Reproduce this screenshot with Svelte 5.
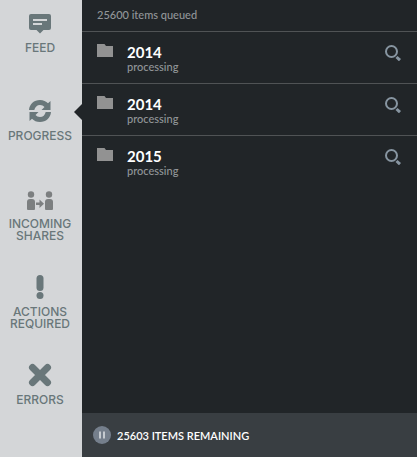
<script>
  let active = $state('progress');
  let paused = $state(false);

  const tabs = [
    { id: 'feed', label: 'Feed' },
    { id: 'progress', label: 'Progress' },
    { id: 'shares', label: 'Incoming Shares' },
    { id: 'actions', label: 'Actions Required' },
    { id: 'errors', label: 'Errors' }
  ];

  const items = [
    { name: '2014', status: 'processing' },
    { name: '2014', status: 'processing' },
    { name: '2015', status: 'processing' }
  ];
</script>

<div class="app">
  <nav class="sidebar">
    {#each tabs as tab}
      <button class="tab" class:active={active === tab.id} onclick={() => (active = tab.id)}>
        <svg class="tab-icon" viewBox="0 0 28 24" aria-hidden="true">
          {#if tab.id === 'feed'}
            <path d="M5 3h18q2 0 2 2v12q0 2-2 2h-5.500l-3.500 3.500-3.500-3.500H5q-2 0-2-2V5q0-2 2-2z" />
            <path class="cut" d="M7 8h14v2H7zM7 12h9v2H7z" />
          {:else if tab.id === 'progress'}
            <path d="M3 11C3.500 5 8 1 14 1c3.500 0 6 1.300 8 3.300L24.500 2v9H15.500l3-3C17.300 6.700 16 6 14 6c-3 0-5 2-5.700 5z" />
            <path d="M25 13c-.5 6-5 10-11 10-3.500 0-6-1.300-8-3.300L3.500 22v-9h9l-3 3c1.200 1.300 2.500 2 4.500 2 3 0 5-2 5.700-5z" />
          {:else if tab.id === 'shares'}
            <g class="people">
              <circle cx="5" cy="7.500" r="3.200" />
              <path d="M1 22v-7q0-3 3-3h2q3 0 3 3v7q0 1-1 1H2q-1 0-1-1z" />
              <circle cx="23" cy="7.500" r="3.200" />
              <path d="M19 22v-7q0-3 3-3h2q3 0 3 3v7q0 1-1 1h-6q-1 0-1-1z" />
              <path d="M10 15.500h3.500V12.500l4.500 4.200-4.500 4.200v-3H10z" />
            </g>
          {:else if tab.id === 'actions'}
            <rect x="10.500" y="0" width="7" height="16" rx="3.500" />
            <circle cx="14" cy="20.500" r="3.500" />
          {:else}
            <path class="cross" d="M6.500 4.500l15 15M21.500 4.500l-15 15" />
          {/if}
        </svg>
        <span class="tab-label">{tab.label}</span>
      </button>
    {/each}
  </nav>

  <main class="panel">
    <p class="queued">25600 items queued</p>

    <ul class="items">
      {#each items as item}
        <li class="item">
          <svg class="folder" viewBox="0 0 16 13" aria-hidden="true">
            <path d="M0 0h7.500L9 2h7v11H0z" />
          </svg>
          <div class="info">
            <span class="name">{item.name}</span>
            <span class="status">{item.status}</span>
          </div>
          <button class="search" aria-label="Find {item.name}">
            <svg viewBox="0 0 16 16" aria-hidden="true">
              <circle cx="6.500" cy="6.500" r="5.500" />
              <path class="handle" d="M11.500 12l3.500 3.200" />
            </svg>
          </button>
        </li>
      {/each}
    </ul>

    <footer class="footer">
      <button class="pause" aria-label={paused ? 'Resume' : 'Pause'} onclick={() => (paused = !paused)}>
        <svg viewBox="0 0 18 18" aria-hidden="true">
          <circle cx="9" cy="9" r="9" />
          {#if paused}
            <path d="M7 5l6 4-6 4z" />
          {:else}
            <path d="M6 5.500h2v7H6zM10 5.500h2v7h-2z" />
          {/if}
        </svg>
      </button>
      <span>25603 ITEMS REMAINING</span>
    </footer>
  </main>
</div>

<style>
  :global(body) {
    margin: 0;
    background: #212528;
  }

  .app {
    display: flex;
    min-height: 100vh;
    font-family: Lato, sans-serif;
    color: #fff;
  }

  button {
    padding: 0;
    border: 0;
    background: none;
    font: inherit;
    color: inherit;
    cursor: pointer;
  }

  .sidebar {
    display: flex;
    flex-direction: column;
    flex: none;
    width: 82px;
    background: #d4d6d8;
  }

  .tab {
    position: relative;
    display: flex;
    flex-direction: column;
    align-items: center;
    gap: 7px;
    min-height: 88px;
    padding: 11px 5px 0 3px;
    color: #69777a;
  }

  .tab.active::after {
    content: '';
    position: absolute;
    top: 16px;
    right: 0;
    border: 8px solid transparent;
    border-left-width: 0;
    border-right-color: #212528;
  }

  .tab-icon {
    width: 28px;
    height: 24px;
    fill: currentColor;
  }

  .cut {
    fill: #d4d6d8;
  }

  .people {
    fill: #7c7f80;
  }

  .cross {
    fill: none;
    stroke: currentColor;
    stroke-width: 7;
    stroke-linecap: round;
  }

  .tab-label {
    font-family: Inter, sans-serif;
    font-size: 12px;
    font-weight: 500;
    line-height: 12px;
    text-transform: uppercase;
  }

  .panel {
    display: flex;
    flex-direction: column;
    flex: 1;
    min-width: 0;
    background: #212528;
  }

  .queued {
    margin: 0;
    padding: 7px 15px 8px;
    font-size: 11px;
    font-weight: 500;
    line-height: 16px;
    color: #929699;
  }

  .items {
    flex: 1;
    margin: 0;
    padding: 0;
    list-style: none;
  }

  .item {
    display: flex;
    align-items: flex-start;
    padding: 12px 16px 9px 15px;
    border-top: 1px solid #505355;
  }

  .folder {
    width: 16px;
    height: 13px;
    margin-right: 14px;
    fill: #929292;
  }

  .info {
    display: flex;
    flex-direction: column;
    flex: 1;
  }

  .name {
    font-size: 15px;
    font-weight: 700;
    line-height: 16px;
  }

  .status {
    font-size: 11px;
    font-weight: 500;
    line-height: 14px;
    color: #929699;
  }

  .search {
    display: flex;
    margin-top: 1px;
  }

  .search svg {
    width: 16px;
    height: 16px;
    fill: none;
    stroke: #8795a1;
    stroke-width: 2;
  }

  .search .handle {
    stroke-width: 3;
  }

  .footer {
    display: flex;
    align-items: center;
    gap: 6px;
    min-height: 44px;
    padding: 0 11px;
    background: #393e42;
    font-size: 11px;
    font-weight: 600;
  }

  .pause {
    display: flex;
  }

  .pause svg {
    width: 18px;
    height: 18px;
  }

  .pause circle {
    fill: #757f8c;
  }

  .pause path {
    fill: #c5cad0;
  }
</style>
